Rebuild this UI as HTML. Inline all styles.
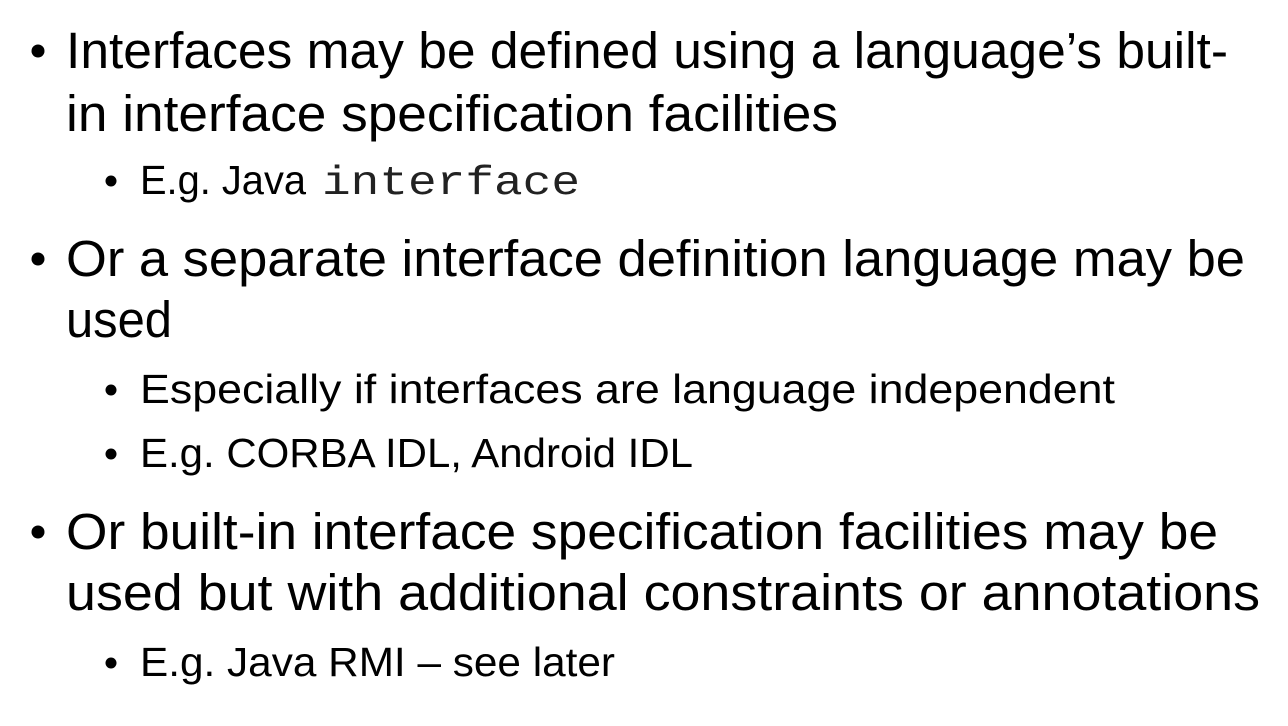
<!DOCTYPE html>
<html><head><meta charset="utf-8"><style>
html,body{margin:0;padding:0;background:#fff;width:1288px;height:726px;overflow:hidden}
svg{display:block}
text{font-family:"Liberation Sans",sans-serif;fill:#000}
.m{font-size:51px}
.s{font-size:41px}
.mono{font-family:"Liberation Mono",monospace;font-size:41px;fill:#222}
</style></head><body>
<svg width="1288" height="726" viewBox="0 0 1288 726">
<circle cx="38" cy="51" r="6.5"/>
<text class="m" x="66" y="68" textLength="1162" lengthAdjust="spacingAndGlyphs">Interfaces may be defined using a language’s built-</text>
<text class="m" x="66" y="131" textLength="772" lengthAdjust="spacingAndGlyphs">in interface specification facilities</text>
<circle cx="111" cy="181" r="5.5"/>
<text class="s" x="140" y="194" textLength="166" lengthAdjust="spacingAndGlyphs">E.g. Java</text>
<text class="mono" x="322" y="194" textLength="258" lengthAdjust="spacingAndGlyphs">interface</text>
<circle cx="38" cy="259" r="6.5"/>
<text class="m" x="66" y="276" textLength="1179" lengthAdjust="spacingAndGlyphs">Or a separate interface definition language may be</text>
<text class="m" x="66" y="337" textLength="106" lengthAdjust="spacingAndGlyphs">used</text>
<circle cx="111" cy="390" r="5.5"/>
<text class="s" x="140" y="403" textLength="975" lengthAdjust="spacingAndGlyphs">Especially if interfaces are language independent</text>
<circle cx="111" cy="454" r="5.5"/>
<text class="s" x="140" y="467" textLength="553" lengthAdjust="spacingAndGlyphs">E.g. CORBA IDL, Android IDL</text>
<circle cx="38" cy="532" r="6.5"/>
<text class="m" x="66" y="549" textLength="1152" lengthAdjust="spacingAndGlyphs">Or built-in interface specification facilities may be</text>
<text class="m" x="66" y="610" textLength="1194" lengthAdjust="spacingAndGlyphs">used but with additional constraints or annotations</text>
<circle cx="111" cy="663" r="5.5"/>
<text class="s" x="140" y="676" textLength="475" lengthAdjust="spacingAndGlyphs">E.g. Java RMI – see later</text>
</svg>
</body></html>
